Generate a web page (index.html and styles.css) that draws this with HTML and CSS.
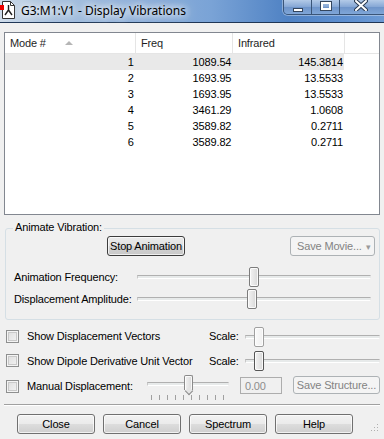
FILE: index.html
```html
<!DOCTYPE html>
<html lang="en">
<head>
  <meta charset="UTF-8" />
  <title>G3:M1:V1 - Display Vibrations</title>
  <link rel="stylesheet" href="styles.css">
</head>
<body>

  <div class="window">
    <div class="titlebar">
      <svg class="app-icon" width="15" height="18" viewBox="0 0 15 18">
        <path d="M2.5 0.5 H10.5 L14.5 4.5 V17.5 H2.5 Z" fill="#fff" stroke="#333" />
        <path d="M10.5 0.5 V4.5 H14.5" fill="none" stroke="#333" />
        <path d="M8.5 4 V9 L5 14 M8.5 9 L12 14" fill="none" stroke="#222" stroke-width="1.4" />
        <rect x="0" y="4" width="4" height="5" fill="#e00" />
      </svg>
      <span class="title">G3:M1:V1 - Display Vibrations</span>
      <div class="caption-buttons">
        <span class="cap cap-min"><i></i></span>
        <span class="cap cap-max"><i></i></span>
        <span class="cap cap-close">
          <svg class="close-glyph" width="14" height="11" viewBox="0 0 14 11">
            <path d="M2 1 L12 10 M12 1 L2 10" stroke="#2a3a50" stroke-width="4" stroke-linecap="round" />
            <path d="M2 1 L12 10 M12 1 L2 10" stroke="#fff" stroke-width="2" stroke-linecap="round" />
          </svg>
        </span>
      </div>
    </div>

    <div class="client">
      <div class="listview">
        <div class="lv-header">
          <div class="col c1">Mode # <span class="sort"></span></div>
          <div class="col c2">Freq</div>
          <div class="col c3">Infrared</div>
          <div class="col c4"></div>
        </div>
        <div class="lv-row selected"><span class="c1">1</span><span class="c2">1089.54</span><span class="c3">145.3814</span></div>
        <div class="lv-row"><span class="c1">2</span><span class="c2">1693.95</span><span class="c3">13.5533</span></div>
        <div class="lv-row"><span class="c1">3</span><span class="c2">1693.95</span><span class="c3">13.5533</span></div>
        <div class="lv-row"><span class="c1">4</span><span class="c2">3461.29</span><span class="c3">1.0608</span></div>
        <div class="lv-row"><span class="c1">5</span><span class="c2">3589.82</span><span class="c3">0.2711</span></div>
        <div class="lv-row"><span class="c1">6</span><span class="c2">3589.82</span><span class="c3">0.2711</span></div>
      </div>

      <div class="group">
        <span class="group-title">Animate Vibration:</span>
        <div class="group-buttons">
          <button class="btn btn-stop">Stop Animation</button>
          <button class="btn btn-movie" disabled>Save Movie... <span class="drop">&#9662;</span></button>
        </div>
        <div class="slider-row first-slider">
          <span class="slider-label">Animation Frequency:</span>
          <div class="track track-long"><span class="thumb" style="left: 111px"></span></div>
        </div>
        <div class="slider-row">
          <span class="slider-label">Displacement Amplitude:</span>
          <div class="track track-long"><span class="thumb" style="left: 109px"></span></div>
        </div>
      </div>

      <div class="option-row row-a">
        <span class="checkbox"></span>
        <span class="option-label">Show Displacement Vectors</span>
        <span class="scale-label">Scale:</span>
        <div class="track track-scale"><span class="thumb thumb-light" style="left: 8px"></span></div>
      </div>
      <div class="option-row row-b">
        <span class="checkbox"></span>
        <span class="option-label">Show Dipole Derivative Unit Vector</span>
        <span class="scale-label">Scale:</span>
        <div class="track track-scale"><span class="thumb thumb-dark" style="left: 8px"></span></div>
      </div>
      <div class="option-row row-c">
        <span class="checkbox"></span>
        <span class="manual-label">Manual Displacement:</span>
        <div class="track track-manual">
          <span class="thumb thumb-pointer" style="left: 36px"></span>
          <div class="ticks">
            <i></i><i></i><i></i><i></i><i></i><i></i><i></i><i></i><i></i><i></i>
          </div>
        </div>
        <span class="textbox">0.00</span>
        <button class="btn btn-structure" disabled>Save Structure...</button>
      </div>

      <div class="separator"></div>

      <div class="dialog-buttons">
        <button class="btn btn-dialog">Close</button>
        <button class="btn btn-dialog">Cancel</button>
        <button class="btn btn-dialog">Spectrum</button>
        <button class="btn btn-dialog">Help</button>
        <span class="grip"></span>
      </div>
    </div>
  </div>

</body>
</html>
```

FILE: styles.css
```css
* {
  box-sizing: border-box;
}

body {
  margin: 0;
  background: #f0f0f0;
  font-family: 'Liberation Sans', Arial, sans-serif;
  font-size: 11px;
  letter-spacing: -0.15px;
  color: #000;
}

.window {
  width: 384px;
  height: 439px;
  position: relative;
  overflow: hidden;
  background: #f0f0f0;
}

/* title bar */

.titlebar {
  height: 23px;
  display: flex;
  align-items: flex-start;
  position: relative;
  background: linear-gradient(to right, #cfdcea 0%, #aac3df 12%, #8fb1da 35%, #7aa3d6 55%, #4f82c4 75%, #5d8fd0 90%, #6c9ad4 100%);
  border-bottom: 1px solid #1f3656;
}

.app-icon {
  margin-top: 1px;
  flex: none;
}

.title {
  margin-left: 6px;
  margin-top: 2px;
  font-family: 'Noto Sans', 'Open Sans', sans-serif;
  font-size: 12px;
  letter-spacing: 0;
  color: #000;
  text-shadow: 0 0 6px #fff, 0 0 10px #fff, 0 0 14px rgba(255, 255, 255, 0.8);
}

.caption-buttons {
  position: absolute;
  top: -1px;
  left: 283px;
  display: flex;
  height: 16px;
  border: 1px solid #3a5578;
  border-top: none;
  border-radius: 0 0 5px 5px;
  overflow: hidden;
  box-shadow: 0 0 0 1px rgba(255, 255, 255, 0.35);
}

.cap {
  height: 15px;
  display: flex;
  align-items: center;
  justify-content: center;
  background: linear-gradient(#b9cfea, #88a9d6 50%, #6d93c8 51%, #7fa6d8);
  border-right: 1px solid #3a5578;
}

.cap-min {
  width: 28px;
}

.cap-min i {
  width: 10px;
  height: 4px;
  margin-top: 6px;
  background: #fff;
  border: 1px solid #34465e;
}

.cap-max {
  width: 28px;
}

.cap-max i {
  width: 10px;
  height: 8px;
  margin-top: -1px;
  border: 2px solid #fff;
  outline: 1px solid #34465e;
}

.cap-close {
  width: 50px;
  border-right: none;
  align-items: flex-start;
  justify-content: flex-start;
  padding: 1px 0 0 14px;
}

.close-glyph {
  display: block;
  flex: none;
}

/* client area */

.client {
  padding: 9px 4px 0 4px;
}

.listview {
  height: 183px;
  background: #fff;
  border: 1px solid #828790;
}

.lv-header {
  display: flex;
  height: 21px;
  border-bottom: 1px solid #e5e5e5;
}

.lv-header .col {
  display: flex;
  align-items: center;
  padding-left: 5px;
  border-right: 1px solid #e5e5e5;
  color: #1e1e1e;
}

.lv-header .c4 {
  flex: 1;
  border-right: none;
}

.c1 {
  width: 131px;
}

.c2 {
  width: 97px;
}

.c3 {
  width: 112px;
}

.sort {
  margin-left: 19px;
  width: 0;
  height: 0;
  border-left: 4px solid transparent;
  border-right: 4px solid transparent;
  border-bottom: 4px solid #b5b5b5;
}

.lv-row {
  display: flex;
  height: 16px;
  align-items: center;
  width: 339px;
}

.lv-row span {
  text-align: right;
  padding-right: 1px;
}

.lv-row .c1 {
  padding-right: 2px;
}

.lv-row.selected {
  background: #e9e9e9;
}

/* animate vibration group */

.group {
  position: relative;
  margin: 13px 0 0 1px;
  height: 92px;
  border: 1px solid #d5dfe5;
  border-radius: 3px;
  padding: 7px 4px 0 0;
}

.group-title {
  position: absolute;
  top: -8px;
  left: 7px;
  padding: 0 2px;
  background: #f0f0f0;
}

.group-buttons {
  display: flex;
  justify-content: space-between;
  padding-left: 101px;
  height: 20px;
}

.btn {
  font-family: 'Liberation Sans', Arial, sans-serif;
  font-size: 11px;
  letter-spacing: -0.15px;
  color: #000;
  height: 20px;
  padding: 0;
  border: 1px solid #707070;
  border-radius: 3px;
  background: linear-gradient(#f2f2f2 0%, #ebebeb 49%, #dddddd 50%, #cfcfcf 100%);
  box-shadow: inset 0 0 0 1px rgba(255, 255, 255, 0.7);
}

.btn:disabled {
  color: #838383;
  border-color: #adb2b5;
  background: #f4f4f4;
  box-shadow: none;
}

.btn-stop {
  width: 78px;
  border-color: #3c3c3c;
  background: linear-gradient(#eaeaea 0%, #e2e2e2 49%, #d3d3d3 50%, #c8c8c8 100%);
}

.btn-movie {
  width: 85px;
  text-align: left;
  padding-left: 6px;
}

.drop {
  font-size: 9px;
  color: #9a9a9a;
  margin-left: 1px;
}

.slider-row {
  display: flex;
  align-items: center;
  height: 22px;
}

.first-slider {
  margin-top: 10px;
}

.slider-label {
  width: 131px;
  padding-left: 8px;
}

.track {
  position: relative;
  height: 4px;
  border-top: 1px solid #b0b0b0;
  border-bottom: 1px solid #fff;
  border-left: 1px solid #c8c8c8;
  border-right: 1px solid #e8e8e8;
  background: #e7eaea;
}

.track-long {
  width: 234px;
}

.thumb {
  position: absolute;
  top: -9px;
  width: 10px;
  height: 20px;
  border: 1px solid #7c7c7c;
  border-radius: 2px;
  background: linear-gradient(to right, #f2f2f2, #e6e6e6 50%, #d8d8d8);
  box-shadow: inset 0 0 0 1px rgba(255, 255, 255, 0.8);
}

.thumb-light {
  border-color: #a0a0a0;
  background: linear-gradient(to right, #fafafa, #f0f0f0);
}

.thumb-dark {
  border-color: #555;
}

/* option rows */

.option-row {
  display: flex;
  align-items: center;
  height: 24px;
  padding-left: 2px;
}

.row-a {
  margin-top: 4px;
}

.row-b {
  height: 25px;
}

.row-c {
  height: 26px;
}

.checkbox {
  width: 13px;
  height: 13px;
  flex: none;
  border: 1px solid #8e8f8f;
  background: linear-gradient(135deg, #dcdcdc, #f4f4f4);
  box-shadow: inset 0 0 0 1px #f4f4f4, inset 0 0 0 2px #c9c9c9;
}

.option-label {
  width: 182px;
  margin-left: 8px;
}

.manual-label {
  width: 120px;
  margin-left: 8px;
}

.scale-label {
  width: 36px;
}

.track-scale {
  width: 135px;
  margin-top: 1px;
}

.track-manual {
  width: 82px;
  margin-top: -5px;
}

.thumb-pointer {
  top: -8px;
  width: 9px;
  height: 15px;
  border-bottom: none;
  border-radius: 2px 2px 0 0;
  border-color: #8a8a8a;
}

.thumb-pointer::after {
  content: '';
  position: absolute;
  left: 0;
  bottom: -4px;
  width: 5px;
  height: 5px;
  border-right: 1px solid #8a8a8a;
  border-bottom: 1px solid #8a8a8a;
  background: #e4e4e4;
  transform: translate(1px, 0) rotate(45deg);
}

.ticks {
  position: absolute;
  top: 12px;
  left: 3px;
  display: flex;
  gap: 7px;
}

.ticks i {
  width: 1px;
  height: 5px;
  background: #a0a0a0;
}

.textbox {
  width: 42px;
  height: 17px;
  margin-left: 11px;
  margin-top: -2px;
  padding: 1px 0 0 4px;
  border: 1px solid #adadad;
  color: #8d8d8d;
  display: flex;
  align-items: center;
}

.btn-structure {
  width: 87px;
  height: 18px;
  margin-left: 11px;
  margin-top: -2px;
}

.separator {
  margin-top: 5px;
  height: 2px;
  border-top: 1px solid #a0a0a0;
  border-bottom: 1px solid #fff;
}

.dialog-buttons {
  display: flex;
  gap: 8px;
  padding-left: 13px;
  margin-top: 8px;
  position: relative;
}

.btn-dialog {
  width: 78px;
}

.grip {
  position: absolute;
  right: 2px;
  top: 9px;
  width: 8px;
  height: 8px;
  background:
    radial-gradient(circle, #b0b0b0 0.8px, transparent 1px) 0 0 / 3px 3px;
  clip-path: polygon(100% 0, 100% 100%, 0 100%);
}
```
